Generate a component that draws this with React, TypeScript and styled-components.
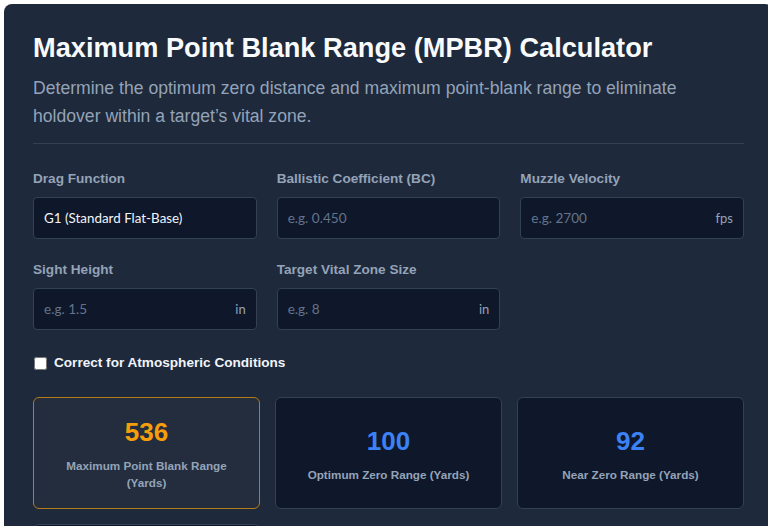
import React, { useState } from 'react';
import styled, { createGlobalStyle } from 'styled-components';

const GlobalStyle = createGlobalStyle`
  html, body {
    margin: 0;
    padding: 0;
    background: #ffffff;
    overflow: hidden;
  }
  body {
    font-family: "Liberation Sans", Arial, sans-serif;
  }
`;

const Page = styled.div`
  padding: 4px 0 0 4px;
  width: 800px;
`;

const Card = styled.section`
  width: 769px;
  box-sizing: border-box;
  background: #1e293b;
  border-radius: 8px;
  padding: 28px 29px 40px;
  color: #f8fafc;
`;

const Header = styled.header`
  border-bottom: 1px solid #334155;
  padding-bottom: 13px;
  margin-bottom: 27px;
`;

const Title = styled.h1`
  margin: 0 0 10px;
  font-size: 27.2px;
  line-height: 32px;
  font-weight: 700;
  color: #f8fafc;
`;

const Lead = styled.p`
  margin: 0;
  font-size: 17.6px;
  line-height: 28px;
  color: #94a3b8;
`;

const FieldGrid = styled.div`
  display: grid;
  grid-template-columns: repeat(3, minmax(0, 1fr));
  column-gap: 20px;
  row-gap: 23px;
`;

const Field = styled.div`
  display: flex;
  flex-direction: column;
  min-width: 0;
`;

const Label = styled.label`
  font-size: 13.6px;
  font-weight: 700;
  line-height: 16px;
  color: #94a3b8;
  margin-bottom: 10px;
`;

const InputWrap = styled.div`
  display: flex;
  align-items: center;
  height: 42px;
  box-sizing: border-box;
  background: #0f172a;
  border: 1px solid #334155;
  border-radius: 4px;
  padding: 0 10px 0 10px;
`;

const Input = styled.input`
  flex: 1;
  width: 0;
  min-width: 0;
  background: transparent;
  border: none;
  outline: none;
  padding: 0;
  font-family: Lato, "Noto Sans", sans-serif;
  font-size: 13.6px;
  color: #e2e8f0;
  &::placeholder {
    color: #64748b;
  }
`;

const Select = styled.select`
  appearance: none;
  width: 100%;
  height: 42px;
  box-sizing: border-box;
  background: #0f172a;
  border: 1px solid #334155;
  border-radius: 4px;
  padding: 0 10px;
  font-family: Lato, "Noto Sans", sans-serif;
  font-size: 13.4px;
  color: #f1f5f9;
  outline: none;
`;

const Unit = styled.span`
  font-family: Lato, "Noto Sans", sans-serif;
  font-size: 13px;
  color: #94a3b8;
`;

const CheckRow = styled.label`
  display: flex;
  align-items: center;
  gap: 7px;
  margin-top: 25px;
  font-size: 13.6px;
  font-weight: 700;
  line-height: 16px;
  color: #f1f5f9;
`;

const Check = styled.input`
  width: 13px;
  height: 13px;
  margin: 0 0 0 1px;
`;

const Results = styled.div`
  display: grid;
  grid-template-columns: repeat(3, minmax(0, 1fr));
  gap: 15px;
  margin-top: 26px;
`;

const ResultCard = styled.div<{ $primary?: boolean }>`
  display: flex;
  flex-direction: column;
  align-items: center;
  justify-content: center;
  min-height: 111px;
  box-sizing: border-box;
  padding: 19px 20px 17px;
  border-radius: 6px;
  text-align: center;
  background: ${(p) => (p.$primary ? '#232d3d' : '#0f172a')};
  border: 1px solid ${(p) => (p.$primary ? '#b47b19' : '#334155')};
`;

const Value = styled.div<{ $primary?: boolean }>`
  font-size: 26px;
  font-weight: 700;
  line-height: 30px;
  color: ${(p) => (p.$primary ? '#f59e0b' : '#3b82f6')};
  margin-bottom: 10px;
`;

const ResultLabel = styled.div`
  font-size: 11.7px;
  font-weight: 700;
  line-height: 17px;
  color: #94a3b8;
`;

const fields = [
  { id: 'bc', label: 'Ballistic Coefficient (BC)', placeholder: 'e.g. 0.450' },
  { id: 'mv', label: 'Muzzle Velocity', placeholder: 'e.g. 2700', unit: 'fps' },
  { id: 'sh', label: 'Sight Height', placeholder: 'e.g. 1.5', unit: 'in' },
  { id: 'vz', label: 'Target Vital Zone Size', placeholder: 'e.g. 8', unit: 'in' },
];

const results = [
  { value: '536', label: 'Maximum Point Blank Range (Yards)', primary: true },
  { value: '100', label: 'Optimum Zero Range (Yards)' },
  { value: '92', label: 'Near Zero Range (Yards)' },
  { value: '3.9', label: 'Maximum Bullet Rise (Inches)' },
];

const App = () => {
  const [atmos, setAtmos] = useState(false);

  return (
    <Page>
      <GlobalStyle />
      <Card>
        <Header>
          <Title>Maximum Point Blank Range (MPBR) Calculator</Title>
          <Lead>
            Determine the optimum zero distance and maximum point-blank range to eliminate
            holdover within a target&rsquo;s vital zone.
          </Lead>
        </Header>

        <FieldGrid>
          <Field>
            <Label htmlFor="drag">Drag Function</Label>
            <Select id="drag" defaultValue="g1">
              <option value="g1">G1 (Standard Flat-Base)</option>
              <option value="g7">G7 (Boat-Tail)</option>
            </Select>
          </Field>
          {fields.map((f) => (
            <Field key={f.id}>
              <Label htmlFor={f.id}>{f.label}</Label>
              <InputWrap>
                <Input id={f.id} placeholder={f.placeholder} />
                {f.unit && <Unit>{f.unit}</Unit>}
              </InputWrap>
            </Field>
          ))}
        </FieldGrid>

        <CheckRow>
          <Check type="checkbox" checked={atmos} onChange={(e) => setAtmos(e.target.checked)} />
          Correct for Atmospheric Conditions
        </CheckRow>

        <Results>
          {results.map((r) => (
            <ResultCard key={r.label} $primary={r.primary}>
              <Value $primary={r.primary}>{r.value}</Value>
              <ResultLabel>{r.label}</ResultLabel>
            </ResultCard>
          ))}
        </Results>
      </Card>
    </Page>
  );
};

export default App;
